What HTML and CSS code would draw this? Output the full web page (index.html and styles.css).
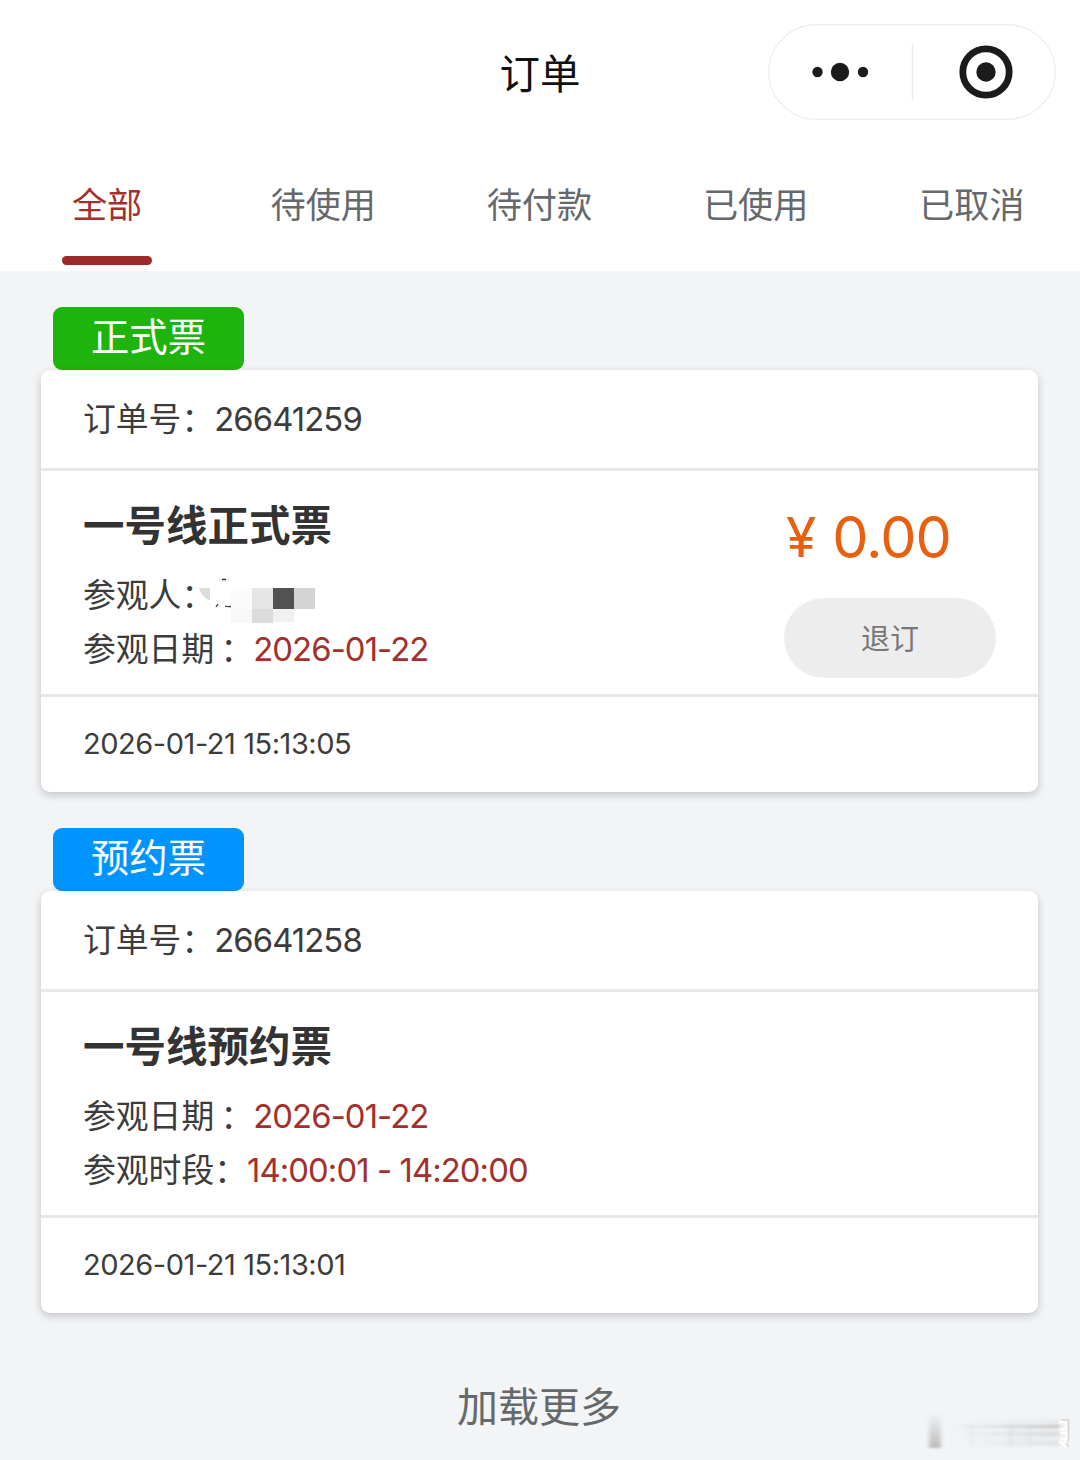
FILE: index.html
```html
<!DOCTYPE html>
<html lang="zh-CN">
<head>
    <meta charset="UTF-8">
    <meta name="viewport" content="width=device-width, initial-scale=1.0">
    <title>订单</title>
    <link rel="stylesheet" href="styles.css">
</head>
<body>
    <header class="navbar">
        <h1>订单</h1>
        <div class="capsule">
            <svg width="288" height="96" viewBox="0 0 288 96">
                <rect x="0.75" y="0.75" width="286.5" height="94.5" rx="47.25" fill="#fff" stroke="#eeeeee" stroke-width="1.3"/>
                <path d="M144.5 19v58" stroke="#ececec" stroke-width="1.5"/>
                <g fill="#1b1b1b">
                    <circle cx="49.5" cy="48" r="5.2"/>
                    <circle cx="72" cy="48" r="9.2"/>
                    <circle cx="95" cy="48" r="5.2"/>
                    <circle cx="218" cy="48" r="9.7"/>
                </g>
                <circle cx="218" cy="48" r="23.2" fill="none" stroke="#1b1b1b" stroke-width="6.8"/>
            </svg>
        </div>
    </header>

    <nav class="tabs">
        <a class="tab active">全部</a>
        <a class="tab">待使用</a>
        <a class="tab">待付款</a>
        <a class="tab">已使用</a>
        <a class="tab">已取消</a>
    </nav>

    <main class="orders">
        <section class="order">
            <div class="badge green">正式票</div>
            <div class="card">
                <div class="card-header">订单号：<span class="num">26641259</span></div>
                <div class="card-body">
                    <div class="info">
                        <h2>一号线正式票</h2>
                        <p class="visitor">参观人：
                            <!-- 姓名打码 -->
                            <svg class="mask" width="118" height="46" viewBox="0 0 118 46" shape-rendering="crispEdges">
                                <path d="M2 10h11v12q-8-2-11-12z" fill="#dcdcdc" shape-rendering="auto"/>
                                <path d="M25 1.5h4M19 29l2-3M28 28q3 1 6 .5" fill="none" stroke="#333" stroke-width="1.3" shape-rendering="auto"/>
                                <rect x="34" y="10" width="21" height="21" fill="#fbfbfb"/>
                                <rect x="55" y="10" width="21" height="21" fill="#e6e6e6"/>
                                <rect x="76" y="10" width="21" height="21" fill="#525252"/>
                                <rect x="97" y="10" width="21" height="21" fill="#d4d4d4"/>
                                <rect x="34" y="31" width="21" height="14" fill="#f8f8f8"/>
                                <rect x="55" y="31" width="21" height="14" fill="#dcdcdc"/>
                                <rect x="76" y="31" width="21" height="13" fill="#f1f1f1"/>
                            </svg>
                        </p>
                        <p class="visit-date">参观日期 ：<span class="num red">2026-01-22</span></p>
                    </div>
                    <div class="action">
                        <div class="price"><span class="yen">¥</span>0.00</div>
                        <button>退订</button>
                    </div>
                </div>
                <div class="card-footer">2026-01-21 15:13:05</div>
            </div>
        </section>

        <section class="order">
            <div class="badge blue">预约票</div>
            <div class="card">
                <div class="card-header">订单号：<span class="num">26641258</span></div>
                <div class="card-body">
                    <div class="info">
                        <h2>一号线预约票</h2>
                        <p class="visit-date">参观日期 ：<span class="num red">2026-01-22</span></p>
                        <p>参观时段：<span class="num red">14:00:01 - 14:20:00</span></p>
                    </div>
                </div>
                <div class="card-footer">2026-01-21 15:13:01</div>
            </div>
        </section>
    </main>

    <div class="load-more">加载更多</div>

    <!-- 右下角模糊水印 -->
    <svg class="watermark" width="164" height="50" viewBox="0 0 164 50">
        <defs>
            <linearGradient id="fadeDown" x1="0" y1="0" x2="0" y2="1">
                <stop offset="0" stop-color="#bbb" stop-opacity="0"/>
                <stop offset="1" stop-color="#bbb"/>
            </linearGradient>
            <linearGradient id="fadeRight" x1="0" y1="0" x2="1" y2="0">
                <stop offset="0" stop-color="#ccc" stop-opacity="0"/>
                <stop offset="1" stop-color="#c4c4c4"/>
            </linearGradient>
            <filter id="soft" x="-50%" y="-50%" width="200%" height="200%">
                <feGaussianBlur stdDeviation="2 1"/>
            </filter>
        </defs>
        <g filter="url(#soft)">
            <rect x="17" y="8" width="12" height="35" fill="url(#fadeDown)"/>
            <rect x="30" y="14" width="118" height="28" fill="url(#fadeRight)" opacity="0.2"/>
            <rect x="40" y="20" width="108" height="3" fill="url(#fadeRight)" opacity="0.9"/>
            <rect x="40" y="27" width="108" height="4" fill="url(#fadeRight)" opacity="0.4"/>
            <rect x="60" y="36" width="88" height="4" fill="url(#fadeRight)" opacity="0.2"/>
            <rect x="57" y="20" width="4" height="22" fill="#ccc" opacity="0.15"/>
            <rect x="97" y="20" width="4" height="22" fill="#ccc" opacity="0.3"/>
            <rect x="116" y="20" width="4" height="22" fill="#ccc" opacity="0.2"/>
        </g>
        <path d="M149 15h7.500v20l-2 3 2 4" fill="none" stroke="#d4d4d4" stroke-width="1.500"/>
        <path d="M147 17h7v7.500h-7M148 28h6.500v6.500h-6M147 36l7 6M155 36l-5 3" fill="none" stroke="#fff" stroke-width="1.800"/>
    </svg>
</body>
</html>
```
FILE: styles.css
```css
* {
    box-sizing: border-box;
}
body {
    margin: 0;
    height: 1460px;
    position: relative;
    overflow: hidden;
    background-color: #f2f4f6;
    color: #3c3c3c;
    font-family: Inter, "Noto Sans CJK SC", sans-serif;
    font-size: 32.8px;
}
h1, h2, p {
    margin: 0;
    font-weight: normal;
}
svg {
    display: block;
}
.navbar {
    display: grid;
    grid-template-columns: 1fr auto 1fr;
    align-items: center;
    height: 143px;
    padding-right: 24px;
    padding-left: 24px;
    background-color: #fff;
}
.navbar h1 {
    grid-column: 2;
    padding-top: 6px;
    font-size: 40.5px;
    line-height: 60px;
    color: #111;
}
.capsule {
    justify-self: end;
}
.tabs {
    display: grid;
    grid-template-columns: repeat(5, 216.2px);
    height: 128px;
    padding-bottom: 6px;
    background-color: #fff;
    margin-left: -1px;
}
.tab {
    display: flex;
    flex-direction: column;
    align-items: center;
    justify-content: space-between;
    padding-top: 36px;
    font-size: 35.2px;
    line-height: 52px;
    color: #66696b;
}
.tab.active {
    color: #a3302c;
}
.tab.active::after {
    content: "";
    width: 90px;
    height: 9px;
    border-radius: 5px;
    background-color: #9b2929;
}
.orders {
    display: flex;
    flex-direction: column;
    gap: 36px;
    padding: 36px 42px 0 41px;
}
.badge {
    width: 191px;
    height: 63px;
    margin-left: 12px;
    border-radius: 9px;
    color: #fff;
    font-size: 38.3px;
    line-height: 61px;
    text-align: center;
}
.badge.green {
    background-color: #1fb30d;
}
.badge.blue {
    background-color: #0094ff;
}
.card {
    height: 422px;
    border-radius: 9px;
    background-color: #fff;
    box-shadow: 0 3px 9px rgba(0, 0, 20, 0.2);
}
.card-header {
    height: 101px;
    padding-left: 42px;
    border-bottom: 3px solid #e8e8e8;
    line-height: 98px;
}
.card-body {
    display: flex;
    justify-content: space-between;
    height: 226px;
    padding: 28px 42px 0;
    border-bottom: 3px solid #e8e8e8;
}
.info h2 {
    margin-bottom: 15px;
    font-size: 41.5px;
    font-weight: bold;
    line-height: 54px;
    color: #333;
}
.info p {
    height: 54px;
    line-height: 54px;
    white-space: nowrap;
}
.visitor {
    display: flex;
}
.visit-date {
    word-spacing: -3px;
}
.mask {
    margin-top: 10px;
    margin-left: -17px;
}
.num {
    letter-spacing: -0.9px;
}
.red {
    color: #a3302c;
}
.action {
    width: 212px;
}
.price {
    display: flex;
    gap: 17px;
    margin-bottom: 31px;
    padding-top: 8px;
    padding-left: 2px;
    font-size: 57.5px;
    line-height: 60px;
    letter-spacing: -1px;
    color: #e8600f;
}
.yen {
    font-size: 55px;
}
button {
    display: block;
    width: 212px;
    height: 80px;
    padding: 0 0 2px;
    border: none;
    border-radius: 40px;
    background-color: #ededed;
    color: #777;
    font-family: inherit;
    font-size: 29px;
}
.card-footer {
    padding-left: 42px;
    font-size: 29px;
    line-height: 94px;
    letter-spacing: -0.45px;
}
.load-more {
    margin-top: 63px;
    padding-right: 2px;
    color: #66696b;
    font-size: 41px;
    line-height: 62px;
    text-align: center;
}
.watermark {
    position: absolute;
    right: 4px;
    bottom: 5px;
}
```
